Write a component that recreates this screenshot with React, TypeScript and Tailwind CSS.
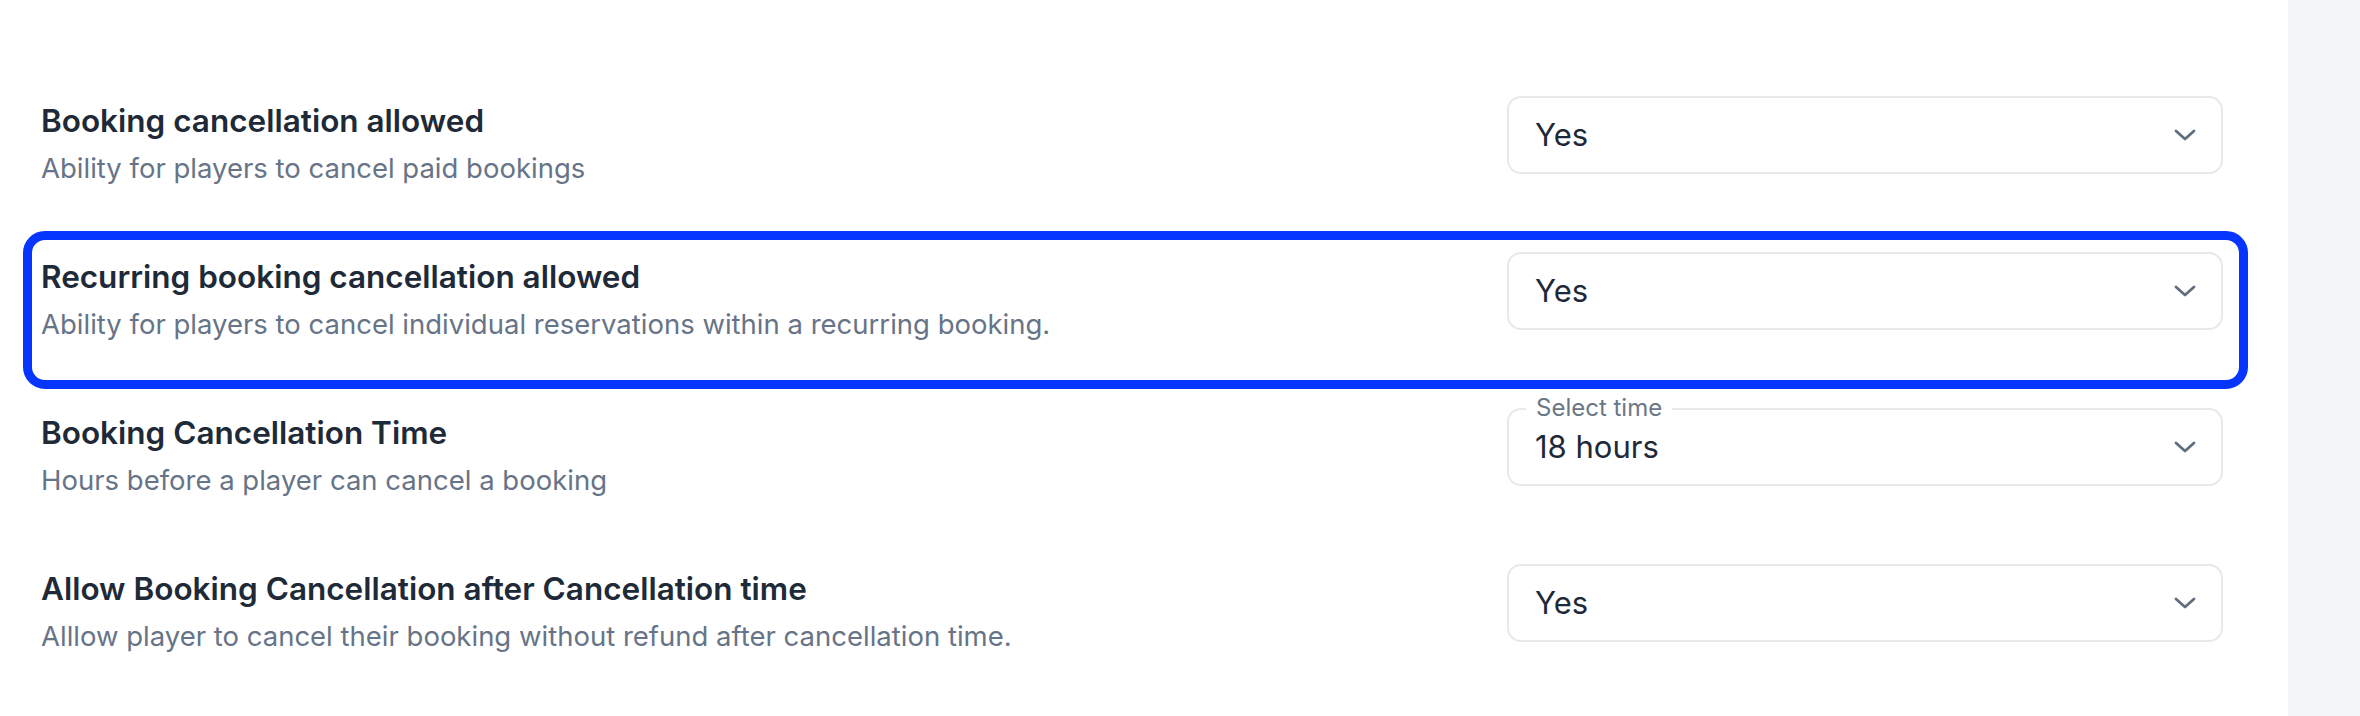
import React from "react";

type Row = {
  title: string;
  desc: string;
  value: string;
  label?: string;
  highlight?: boolean;
};

const rows: Row[] = [
  { title: "Booking cancellation allowed", desc: "Ability for players to cancel paid bookings", value: "Yes" },
  {
    title: "Recurring booking cancellation allowed",
    desc: "Ability for players to cancel individual reservations within a recurring booking.",
    value: "Yes",
    highlight: true,
  },
  {
    title: "Booking Cancellation Time",
    desc: "Hours before a player can cancel a booking",
    value: "18 hours",
    label: "Select time",
  },
  {
    title: "Allow Booking Cancellation after Cancellation time",
    desc: "Alllow player to cancel their booking without refund after cancellation time.",
    value: "Yes",
  },
];

function Chevron() {
  return (
    <svg width="22" height="12" viewBox="0 0 22 12" fill="none" className="shrink-0">
      <path d="M2 2 L11 10 L20 2" stroke="#5f6e7d" strokeWidth="2.8" strokeLinecap="round" strokeLinejoin="round" />
    </svg>
  );
}

function Select({ value, label }: { value: string; label?: string }) {
  return (
    <div className="relative w-[716px] h-[78px] shrink-0 rounded-[14px] border-2 border-[#e8e9eb] bg-white flex items-center justify-between pl-[26px] pr-[25px]">
      {label && (
        <span className="absolute left-[17px] top-[-16px] bg-white px-[10px] text-[24px] leading-[28px] text-[#6b7785]">
          {label}
        </span>
      )}
      <span className="text-[31px] leading-[38px] text-[#1e2937]">{value}</span>
      <Chevron />
    </div>
  );
}

export default function App() {
  return (
    <div
      className="flex w-[2360px] h-[716px] bg-white overflow-hidden"
      style={{ fontFamily: "Inter, 'Noto Sans', sans-serif" }}
    >
      <main className="flex-1 bg-white pl-[41px] pr-[65px] pt-[96px]">
        <div className="flex flex-col gap-[66px]">
          {rows.map((r) => (
            <div key={r.title} className="relative flex items-start justify-between h-[90px]">
              {r.highlight && (
                <div className="pointer-events-none absolute top-[-21px] bottom-[-47px] left-[-18px] right-[-25px] rounded-[22px] border-[9px] border-[#0535ff]" />
              )}
              <div className="mt-[3px] flex flex-col">
                <div className="text-[31.5px] leading-[44px] font-semibold text-[#1e2a38]">{r.title}</div>
                <div className="mt-[5px] text-[27.5px] leading-[40px] text-[#677487]">{r.desc}</div>
              </div>
              <Select value={r.value} label={r.label} />
            </div>
          ))}
        </div>
      </main>
      <aside className="w-[72px] shrink-0 bg-[#f3f5f8]" />
    </div>
  );
}
